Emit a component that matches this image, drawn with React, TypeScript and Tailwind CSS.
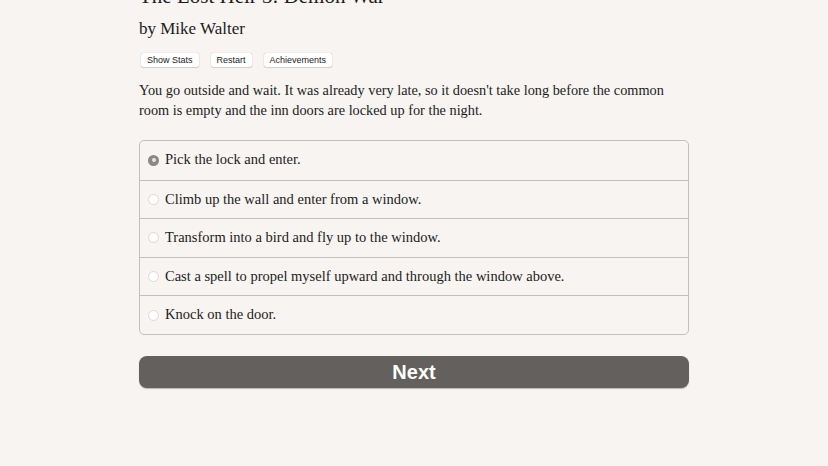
import { useState } from "react";

const options = [
  "Pick the lock and enter.",
  "Climb up the wall and enter from a window.",
  "Transform into a bird and fly up to the window.",
  "Cast a spell to propel myself upward and through the window above.",
  "Knock on the door.",
];

const serif = { fontFamily: '"Liberation Serif", "DejaVu Serif", serif' };

export default function App() {
  const [choice, setChoice] = useState(0);

  return (
    <div className="min-h-[466px] overflow-hidden bg-[#f7f4f1] text-[#1c1c1c]" style={serif}>
      <div className="mx-auto w-[550px]">
        <h1 className="-mt-[16px] text-[21px] leading-[24px]">The Lost Heir 3: Demon War</h1>
        <h2 className="mt-[10px] text-[17px] leading-[22px]">by Mike Walter</h2>

        <div className="mt-[13px] flex gap-[12px] pl-[2px] font-['Liberation_Sans',sans-serif] text-[9px] leading-none">
          {["Show Stats", "Restart", "Achievements"].map((b) => (
            <button
              key={b}
              className="h-[14px] rounded-[2px] bg-white px-[6px] shadow-[0_0_1px_rgba(0,0,0,0.35),0_1px_1px_rgba(0,0,0,0.12)]"
            >
              {b}
            </button>
          ))}
        </div>

        <p className="mt-[13px] text-[14.3px] leading-[20px]">
          You go outside and wait. It was already very late, so it doesn't take long before the common room is
          empty and the inn doors are locked up for the night.
        </p>

        <div className="mt-[20px] overflow-hidden rounded-[5px] border border-[#c2bfbc]">
          {options.map((o, i) => (
            <label
              key={o}
              onClick={() => setChoice(i)}
              className="flex h-[38.6px] cursor-pointer items-center gap-[6px] border-t border-[#c2bfbc] pl-[8px] text-[14.5px] first:border-t-0"
            >
              {choice === i ? (
                <span className="flex size-[11px] items-center justify-center rounded-full bg-[#8b8885]">
                  <span className="size-[4px] rounded-full bg-[#e8e6e4]" />
                </span>
              ) : (
                <span className="size-[11px] rounded-full border border-[#dcd9d6] bg-white" />
              )}
              <span>{o}</span>
            </label>
          ))}
        </div>

        <button className="mt-[21px] h-[32px] w-full rounded-[8px] bg-[#63605d] font-['Liberation_Sans',sans-serif] text-[20px] font-bold text-white shadow-[0_1px_1px_rgba(0,0,0,0.25)]">
          Next
        </button>
      </div>
    </div>
  );
}
